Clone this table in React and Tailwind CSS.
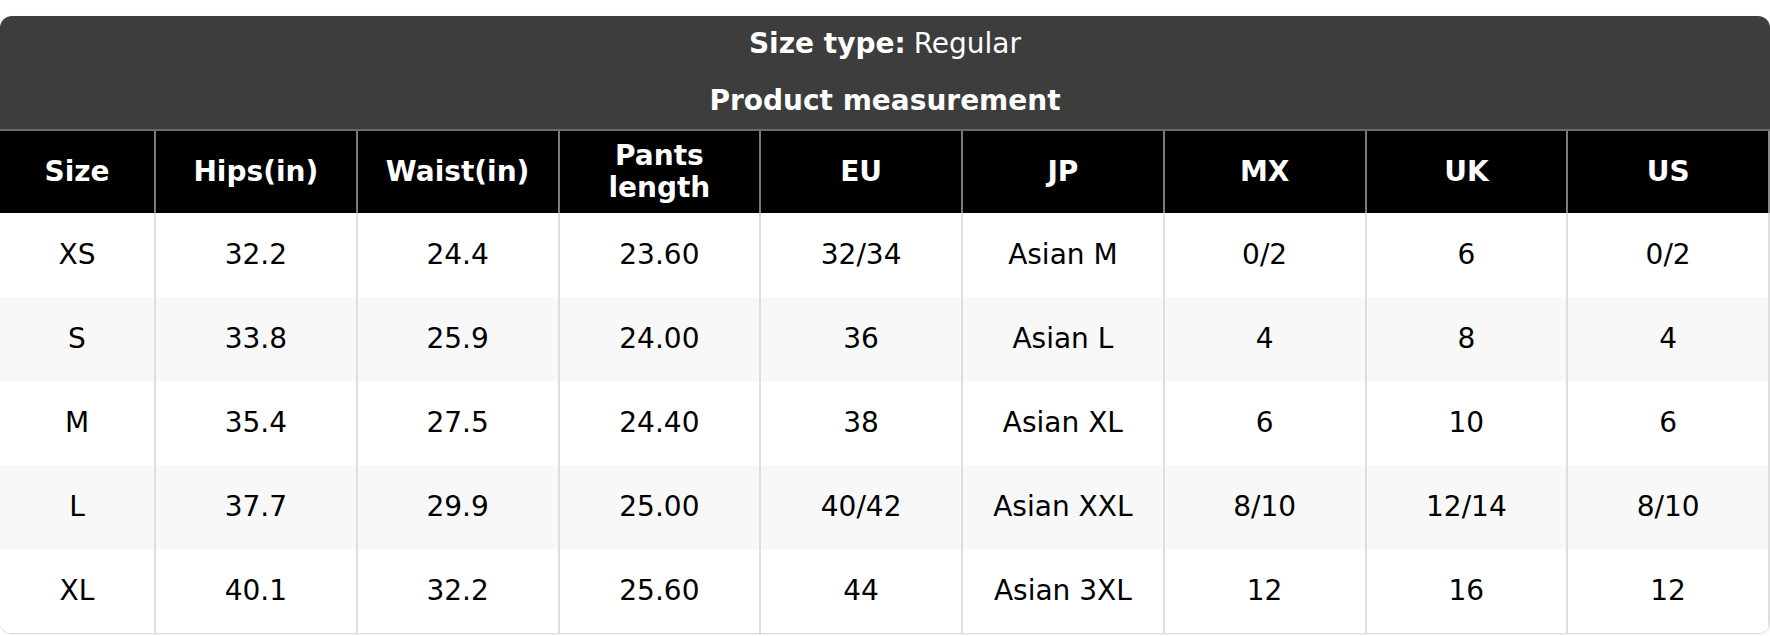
const columns = ["Size", "Hips(in)", "Waist(in)", "Pants length", "EU", "JP", "MX", "UK", "US"];

const rows = [
  ["XS", "32.2", "24.4", "23.60", "32/34", "Asian M", "0/2", "6", "0/2"],
  ["S", "33.8", "25.9", "24.00", "36", "Asian L", "4", "8", "4"],
  ["M", "35.4", "27.5", "24.40", "38", "Asian XL", "6", "10", "6"],
  ["L", "37.7", "29.9", "25.00", "40/42", "Asian XXL", "8/10", "12/14", "8/10"],
  ["XL", "40.1", "32.2", "25.60", "44", "Asian 3XL", "12", "16", "12"],
];

function App() {
  return (
    <div className="w-[1770px] h-[636px] bg-white pt-4 font-['DejaVu_Sans',sans-serif] text-[28px]">
      <div className="rounded-xl overflow-hidden shadow-[0_1px_2px_rgba(0,0,0,0.18)]">
        {/* title block */}
        <div className="bg-[#3d3d3d] text-white">
          <div className="h-[56px] flex items-center justify-center">
            <span className="font-bold mr-2">Size type:</span>
            <span>Regular</span>
          </div>
          <div className="h-[57px] flex items-center justify-center font-bold">
            Product measurement
          </div>
        </div>

        {/* column headers */}
        <div className="grid grid-cols-[156px_repeat(8,1fr)] bg-black text-white font-bold border-t-2 border-[#6a6a6a]">
          {columns.map((c, i) => (
            <div
              key={c}
              className={
                "h-[82px] flex items-center justify-center text-center leading-[32px] px-2 border-r-2 " +
                (i === columns.length - 1 ? "border-[#8a8a8a]" : "border-[#7a7a7a]")
              }
            >
              {c === "Pants length" ? (
                <span>
                  Pants
                  <br />
                  length
                </span>
              ) : (
                c
              )}
            </div>
          ))}
        </div>

        {/* body */}
        {rows.map((r, ri) => (
          <div
            key={r[0]}
            className={
              "grid grid-cols-[156px_repeat(8,1fr)] text-black " +
              (ri % 2 === 1 ? "bg-[#f8f8f8]" : "bg-white")
            }
          >
            {r.map((v, ci) => (
              <div
                key={ci}
                className="h-[84px] flex items-center justify-center border-r-2 border-[#dedede]"
              >
                {v}
              </div>
            ))}
          </div>
        ))}
      </div>
    </div>
  );
}

export default App;
